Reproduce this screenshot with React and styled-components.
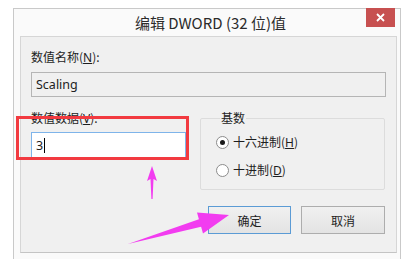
import React from "react";
import styled, { createGlobalStyle } from "styled-components";

const GlobalStyle = createGlobalStyle`
  html, body {
    margin: 0;
    padding: 0;
    background: #ffffff;
  }
  body {
    font-family: "Noto Sans", "Noto Sans CJK SC", sans-serif;
    font-size: 12px;
    color: #1e1e1e;
  }
`;

const Page = styled.div`
  position: relative;
  width: 403px;
  height: 259px;
  overflow: hidden;
  padding: 8px 0 0 13px;
  box-sizing: border-box;
`;

const Window = styled.div`
  width: 388px;
  height: 252px;
  box-sizing: border-box;
  border: 1px solid #c9c9c9;
  border-bottom: none;
  background: #fafafa;
  padding: 0 3px 0 6px;
  display: flex;
  flex-direction: column;
`;

const TitleBar = styled.div`
  position: relative;
  height: 27px;
  display: flex;
  align-items: center;
  justify-content: center;
  font-family: "Noto Sans CJK SC", "Noto Sans", sans-serif;
  font-size: 15px;
  color: #2b2b2b;
  padding-left: 4px;
`;

const CloseButton = styled.div`
  position: absolute;
  top: -1px;
  right: 2px;
  width: 29px;
  height: 19px;
  background: #c75050;
  display: flex;
  align-items: center;
  justify-content: center;
`;

const Panel = styled.div`
  flex: 1;
  background: #f0f0f0;
  border: 1px solid #d6d6d6;
  border-bottom-color: #c4c4c4;
  margin-bottom: 7px;
  padding: 13px 10px 0 10px;
  display: flex;
  flex-direction: column;
`;

const Label = styled.div`
  height: 14px;
  line-height: 14px;
  font-family: "Noto Sans CJK SC", "Noto Sans", sans-serif;
  font-size: 12px;
  color: #1e1e1e;
`;

const Key = styled.span`
  font-family: "Noto Sans", sans-serif;
  text-decoration: underline;
  text-underline-offset: 1px;
`;

const TextField = styled.div`
  height: ${p => p.$h}px;
  margin-top: ${p => p.$gap}px;
  box-sizing: border-box;
  border: 1px solid ${p => (p.$focus ? "#7eb4ea" : "#b5b5b5")};
  background: ${p => (p.$focus ? "#ffffff" : "#f0f0f0")};
  display: flex;
  align-items: center;
  padding-left: 4px;
  font-family: "Noto Sans", sans-serif;
  font-size: 12.5px;
  color: #222;
`;

const Caret = styled.span`
  display: inline-block;
  width: 1px;
  height: 15px;
  background: #000;
  margin-left: 1px;
`;

const Row = styled.div`
  display: flex;
  gap: 14px;
  margin-top: 14px;
`;

const Column = styled.div`
  width: 155px;
  display: flex;
  flex-direction: column;
`;

const GroupBox = styled.fieldset`
  margin: 0;
  width: 185px;
  height: 79px;
  box-sizing: border-box;
  border: 1px solid #dcdcdc;
  border-radius: 2px;
  padding: 10px 0 0 15px;
  display: flex;
  flex-direction: column;
  gap: 14px;
`;

const Legend = styled.legend`
  padding: 0 1px;
  margin-left: 4px;
  height: 14px;
  line-height: 14px;
  font-family: "Noto Sans CJK SC", sans-serif;
  font-size: 12px;
`;

const RadioRow = styled.div`
  display: flex;
  align-items: center;
  gap: 4px;
  height: 14px;
`;

const RadioText = styled.span`
  font-family: "Noto Sans CJK SC", "Noto Sans", sans-serif;
  font-size: 12px;
  line-height: 14px;
`;

const RadioDot = styled.span`
  width: 13px;
  height: 13px;
  box-sizing: border-box;
  border-radius: 50%;
  border: 1px solid #8c8c8c;
  background: #ffffff;
  display: flex;
  align-items: center;
  justify-content: center;
  &::after {
    content: "";
    width: 5px;
    height: 5px;
    border-radius: 50%;
    background: ${p => (p.$checked ? "#1a1a1a" : "transparent")};
  }
`;

const ButtonRow = styled.div`
  display: flex;
  justify-content: flex-end;
  gap: 10px;
  margin-top: 16px;
  padding-right: 1px;
`;

const Button = styled.div`
  width: ${p => p.$w}px;
  height: 28px;
  box-sizing: border-box;
  border: 1px solid ${p => (p.$primary ? "#5b9bd5" : "#adadad")};
  background: linear-gradient(#f0f0f0, #e3e3e3);
  display: flex;
  align-items: center;
  justify-content: center;
  font-family: "Noto Sans CJK SC", sans-serif;
  font-size: 12px;
  color: #1e1e1e;
`;

const Highlight = styled.div`
  position: absolute;
  left: 16px;
  top: 116px;
  width: 173px;
  height: 44px;
  box-sizing: border-box;
  border: 3px solid #f23a40;
  pointer-events: none;
`;

const Arrows = styled.svg`
  position: absolute;
  left: 0;
  top: 0;
  pointer-events: none;
`;

export default function App() {
  return (
    <>
      <GlobalStyle />
      <Page>
        <Window>
          <TitleBar>
            编辑 DWORD (32 位)值
            <CloseButton>
              <svg width="9" height="9" viewBox="0 0 9 9">
                <path d="M1 1L8 8M8 1L1 8" stroke="#fff" strokeWidth="1.8" />
              </svg>
            </CloseButton>
          </TitleBar>
          <Panel>
            <Label>
              数值名称(<Key>N</Key>):
            </Label>
            <TextField $h={25} $gap={8}>Scaling</TextField>
            <Row>
              <Column>
                <Label>
                  数值数据(<Key>V</Key>):
                </Label>
                <TextField $h={26} $gap={7} $focus>
                  3<Caret />
                </TextField>
              </Column>
              <GroupBox>
                <Legend>基数</Legend>
                <RadioRow>
                  <RadioDot $checked />
                  <RadioText>
                    十六进制(<Key>H</Key>)
                  </RadioText>
                </RadioRow>
                <RadioRow>
                  <RadioDot />
                  <RadioText>
                    十进制(<Key>D</Key>)
                  </RadioText>
                </RadioRow>
              </GroupBox>
            </Row>
            <ButtonRow>
              <Button $w={83} $primary>确定</Button>
              <Button $w={84}>取消</Button>
            </ButtonRow>
          </Panel>
        </Window>
        <Highlight />
        <Arrows width="403" height="259" viewBox="0 0 403 259">
          <polygon
            points="152,166 157,181 153.5,179 152.6,199 151.4,199 150.5,179 147,181"
            fill="#f23cf0"
          />
          <polygon
            points="128,244 198.9,219.2 197,212.4 229,215 203,233.6 201.1,226.8"
            fill="#f23cf0"
          />
        </Arrows>
      </Page>
    </>
  );
}
